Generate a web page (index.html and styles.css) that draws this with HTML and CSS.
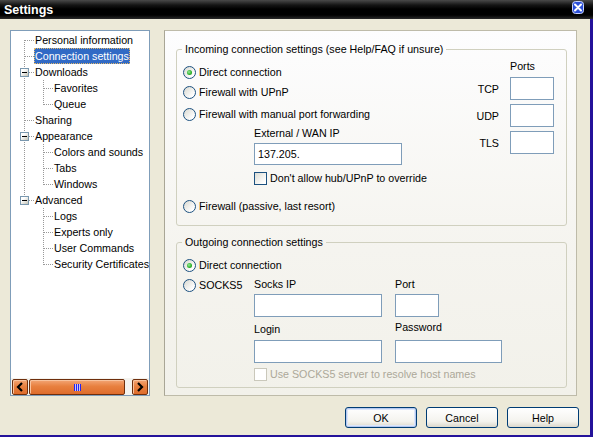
FILE: index.html
```html
<!DOCTYPE html>
<html>
<head>
<meta charset="utf-8">
<title>Settings</title>
<link rel="stylesheet" href="styles.css">
</head>
<body>
<div class="title">
  <span class="title-text">Settings</span>
  <svg class="close" width="12" height="13" viewBox="0 0 12 13">
    <rect x="0.5" y="0.5" width="11" height="12" rx="3" fill="#2C4FD8" stroke="#C8D4FF"/>
    <path d="M3 3.5 L9 9.5 M9 3.5 L3 9.5" stroke="#FFFFFF" stroke-width="2" stroke-linecap="round"/>
  </svg>
</div>
<div class="frame">
  <div class="main">
    <div class="tree">
      <div class="tree-list">
        <div class="node n-first"><span class="g0"></span><span class="lbl">Personal information</span></div>
        <div class="node n-mid"><span class="g0"></span><span class="lbl sel">Connection settings</span></div>
        <div class="node n-mid"><span class="g0"><span class="box"></span></span><span class="lbl">Downloads</span></div>
        <div class="node c-mid"><span class="g1"></span><span class="lbl">Favorites</span></div>
        <div class="node c-last"><span class="g1"></span><span class="lbl">Queue</span></div>
        <div class="node n-mid"><span class="g0"></span><span class="lbl">Sharing</span></div>
        <div class="node n-mid"><span class="g0"><span class="box"></span></span><span class="lbl">Appearance</span></div>
        <div class="node c-mid"><span class="g1"></span><span class="lbl">Colors and sounds</span></div>
        <div class="node c-mid"><span class="g1"></span><span class="lbl">Tabs</span></div>
        <div class="node c-last"><span class="g1"></span><span class="lbl">Windows</span></div>
        <div class="node n-last"><span class="g0"><span class="box"></span></span><span class="lbl">Advanced</span></div>
        <div class="node c-mid-x"><span class="g1"></span><span class="lbl">Logs</span></div>
        <div class="node c-mid-x"><span class="g1"></span><span class="lbl">Experts only</span></div>
        <div class="node c-mid-x"><span class="g1"></span><span class="lbl">User Commands</span></div>
        <div class="node c-last-x"><span class="g1"></span><span class="lbl">Security Certificates</span></div>
      </div>
      <div class="hscroll">
        <span class="sb-btn">
          <svg width="8" height="10" viewBox="0 0 8 10"><polyline points="6,1 2,5 6,9" fill="none" stroke="#000" stroke-width="2.2"/></svg>
        </span>
        <span class="sb-thumb"><span class="grip"></span></span>
        <span class="sb-track"></span>
        <span class="sb-btn">
          <svg width="8" height="10" viewBox="0 0 8 10"><polyline points="2,1 6,5 2,9" fill="none" stroke="#000" stroke-width="2.2"/></svg>
        </span>
      </div>
    </div>
    <div class="page">
      <fieldset class="group g-in">
        <legend>Incoming connection settings (see Help/FAQ if unsure)</legend>
        <div class="in-body">
          <div class="in-left">
            <div class="opt mt8"><span class="radio on"></span><span>Direct connection</span></div>
            <div class="opt mt4"><span class="radio"></span><span>Firewall with UPnP</span></div>
            <div class="opt mt6"><span class="radio"></span><span>Firewall with manual port forwarding</span></div>
            <div class="sub lbl14 mt4">External / WAN IP</div>
            <input class="field f-wan sub mt3" type="text" value="137.205.">
            <div class="opt sub mt5"><span class="check"></span><span>Don't allow hub/UPnP to override</span></div>
            <div class="opt mt12"><span class="radio"></span><span>Firewall (passive, last resort)</span></div>
          </div>
          <div class="ports">
            <span></span><span class="lbl14">Ports</span>
            <span class="plabel">TCP</span><input class="field f-port" type="text">
            <span class="plabel">UDP</span><input class="field f-port" type="text">
            <span class="plabel">TLS</span><input class="field f-port" type="text">
          </div>
        </div>
      </fieldset>
      <fieldset class="group g-out">
        <legend>Outgoing connection settings</legend>
        <div class="out-body">
          <div class="opt mt8"><span class="radio on"></span><span>Direct connection</span></div>
          <div class="socks mt4">
            <div class="opt socks-opt"><span class="radio"></span><span>SOCKS5</span></div>
            <div class="socks-fields">
              <div class="col">
                <div class="lbl14">Socks IP</div>
                <input class="field f-ip mt3" type="text">
                <div class="lbl14 mt5">Login</div>
                <input class="field f-ip mt4" type="text">
              </div>
              <div class="col">
                <div class="lbl14">Port</div>
                <input class="field f-port mt3" type="text">
                <div class="lbl14 mt3">Password</div>
                <input class="field f-pass mt6" type="text">
              </div>
            </div>
          </div>
          <div class="opt sub mt3 disabled"><span class="check dis"></span><span>Use SOCKS5 server to resolve host names</span></div>
        </div>
      </fieldset>
    </div>
  </div>
  <div class="buttons">
    <button class="btn default">OK</button>
    <button class="btn">Cancel</button>
    <button class="btn">Help</button>
  </div>
</div>
</body>
</html>
```
FILE: styles.css
```css
* { box-sizing: border-box; }
html, body { margin: 0; padding: 0; }
body {
  width: 593px;
  height: 437px;
  overflow: hidden;
  background: #ECE9D8;
  font-family: "Liberation Sans", Arial, sans-serif;
  font-size: 10.7px;
  color: #000;
}

/* Title bar */
.title {
  height: 19px;
  display: flex;
  align-items: center;
  justify-content: space-between;
  padding: 0 9px 0 4px;
  background: linear-gradient(#4a4a4a 0, #151515 5px, #000 9px, #000 15px, #2a2a2a 19px);
}
.title-text {
  color: #fff;
  font-weight: bold;
  font-size: 12.5px;
}
.close { display: block; margin-top: -5px; }

/* Window frame */
.frame {
  height: 418px;
  border-right: 3px solid #24129A;
  border-bottom: 2px solid #24129A;
  display: flex;
  flex-direction: column;
}
.main {
  display: flex;
  gap: 14px;
  padding: 11px 0 0 10px;
}

/* Tree */
.tree {
  width: 140px;
  height: 366px;
  border: 1px solid #7F9DB9;
  background: #fff;
  display: flex;
  flex-direction: column;
}
.tree-list {
  flex: 1;
  overflow: hidden;
  padding-top: 1px;
  white-space: nowrap;
}
.node {
  height: 16px;
  display: flex;
  align-items: center;
  background-repeat: no-repeat;
}
.g0 { width: 24px; flex: none; display: flex; align-items: center; padding-left: 9px; }
.g1 { width: 43px; flex: none; }
.lbl { line-height: 16px; }
.sel {
  background: #316AC5;
  color: #fff;
  padding: 0 1px;
  margin-left: -1px;
  outline: 1px dotted #E2B86A;
  outline-offset: -1px;
}
.box {
  width: 9px;
  height: 9px;
  border: 1px solid #7A98AF;
  background: linear-gradient(135deg, #ffffff 30%, #C4C2B4);
  display: flex;
  align-items: center;
  justify-content: center;
}
.box::after {
  content: "";
  width: 5px;
  height: 1px;
  background: #000;
}
.n-first {
  background-image: repeating-linear-gradient(to right, #999 0 1px, transparent 1px 2px),
                    repeating-linear-gradient(to bottom, #999 0 1px, transparent 1px 2px);
  background-position: 14px 8px, 13px 8px;
  background-size: 9px 1px, 1px 8px;
}
.n-mid {
  background-image: repeating-linear-gradient(to right, #999 0 1px, transparent 1px 2px),
                    repeating-linear-gradient(to bottom, #999 0 1px, transparent 1px 2px);
  background-position: 14px 8px, 13px 0;
  background-size: 9px 1px, 1px 16px;
}
.n-last {
  background-image: repeating-linear-gradient(to right, #999 0 1px, transparent 1px 2px),
                    repeating-linear-gradient(to bottom, #999 0 1px, transparent 1px 2px);
  background-position: 14px 8px, 13px 0;
  background-size: 9px 1px, 1px 9px;
}
.c-mid {
  background-image: repeating-linear-gradient(to bottom, #999 0 1px, transparent 1px 2px),
                    repeating-linear-gradient(to right, #999 0 1px, transparent 1px 2px),
                    repeating-linear-gradient(to bottom, #999 0 1px, transparent 1px 2px);
  background-position: 13px 0, 33px 8px, 32px 0;
  background-size: 1px 16px, 9px 1px, 1px 16px;
}
.c-last {
  background-image: repeating-linear-gradient(to bottom, #999 0 1px, transparent 1px 2px),
                    repeating-linear-gradient(to right, #999 0 1px, transparent 1px 2px),
                    repeating-linear-gradient(to bottom, #999 0 1px, transparent 1px 2px);
  background-position: 13px 0, 33px 8px, 32px 0;
  background-size: 1px 16px, 9px 1px, 1px 9px;
}
.c-mid-x {
  background-image: repeating-linear-gradient(to right, #999 0 1px, transparent 1px 2px),
                    repeating-linear-gradient(to bottom, #999 0 1px, transparent 1px 2px);
  background-position: 33px 8px, 32px 0;
  background-size: 9px 1px, 1px 16px;
}
.c-last-x {
  background-image: repeating-linear-gradient(to right, #999 0 1px, transparent 1px 2px),
                    repeating-linear-gradient(to bottom, #999 0 1px, transparent 1px 2px);
  background-position: 33px 8px, 32px 0;
  background-size: 9px 1px, 1px 9px;
}

/* Horizontal scrollbar */
.hscroll {
  height: 17px;
  flex: none;
  display: flex;
  padding: 1px 1px 0 1px;
  background: #F4F3EF;
}
.sb-btn, .sb-thumb {
  height: 16px;
  border: 1px solid #6E2E0C;
  border-radius: 2px;
  background: linear-gradient(#F3A676, #E8803F 45%, #DE6C2C);
  box-shadow: inset 1px 1px 0 #F8C39E;
  display: flex;
  align-items: center;
  justify-content: center;
}
.sb-btn { width: 16px; flex: none; }
.sb-thumb { width: 96px; margin-left: 1px; flex: none; }
.sb-track { flex: 1; }
.grip {
  width: 7px;
  height: 7px;
  background: repeating-linear-gradient(to right, #2424F0 0 1px, #C9C4F2 1px 2px);
}

/* Right page */
.page {
  width: 413px;
  height: 366px;
  border: 1px solid #BEBBA9;
  border-left-color: #A9A696;
  background: linear-gradient(#FDFDFE, #F5F4EF 60%, #F2F1EA);
  padding: 11px 9px 0 11px;
}
.group {
  margin: 0;
  border: 1px solid #D0D0BF;
  border-radius: 3px;
  min-width: 0;
}
.group legend {
  padding: 0 3px;
  margin-left: -1px;
  line-height: 14px;
}
.g-in { padding: 0 11px 11px 6px; }
.g-out { padding: 0 11px 5px 6px; margin-top: 9px; }

.in-body { display: flex; justify-content: space-between; align-items: flex-start; }
.in-left { display: flex; flex-direction: column; align-items: flex-start; }

.opt {
  height: 16px;
  display: flex;
  align-items: center;
  gap: 3px;
  white-space: nowrap;
}
.lbl14 { line-height: 14px; height: 14px; white-space: nowrap; }
.sub { margin-left: 71px; }
.mt3 { margin-top: 3px; }
.mt4 { margin-top: 4px; }
.mt5 { margin-top: 5px; }
.mt6 { margin-top: 6px; }
.mt8 { margin-top: 8px; }
.mt12 { margin-top: 12px; }

.radio {
  width: 13px;
  height: 13px;
  flex: none;
  border: 1px solid #1C5180;
  border-radius: 50%;
  background: linear-gradient(135deg, #D8D8D0, #FFFFFF 80%);
  display: flex;
  align-items: center;
  justify-content: center;
}
.radio.on::after {
  content: "";
  width: 5px;
  height: 5px;
  border-radius: 50%;
  background: radial-gradient(circle at 40% 40%, #9BEA9B, #2EB52E 55%, #1B861B);
}
.check {
  width: 13px;
  height: 13px;
  flex: none;
  border: 1px solid #1C5180;
  background: linear-gradient(135deg, #DCDCD4, #FFFFFF 85%);
}
.check.dis {
  border-color: #CAC8BB;
  background: #fff;
}
.disabled { color: #ACA899; }

.field {
  display: block;
  height: 23px;
  border: 1px solid #7F9DB9;
  background: #fff;
  padding: 0 3px;
  margin-left: 0;
  font-family: "Liberation Sans", Arial, sans-serif;
  font-size: 10.7px;
  color: #000;
  outline: none;
}
.f-wan { width: 148px; height: 22px; margin-left: 71px; }
.f-port { width: 44px; }
.f-ip { width: 128px; }
.f-pass { width: 107px; }

.ports {
  display: grid;
  grid-template-columns: auto 44px;
  column-gap: 11px;
  row-gap: 4px;
  align-items: center;
  margin-top: 3px;
  margin-right: 1px;
}
.plabel { text-align: right; }

.out-body { display: flex; flex-direction: column; align-items: flex-start; }
.socks { display: flex; align-items: flex-start; }
.socks-opt { width: 71px; }
.socks-fields { display: flex; gap: 13px; margin-top: 0; }
.col { display: flex; flex-direction: column; align-items: flex-start; }

/* Buttons */
.buttons {
  display: flex;
  justify-content: flex-end;
  gap: 9px;
  padding-right: 11px;
  margin-top: 11px;
}
.btn {
  width: 72px;
  height: 21px;
  border: 1px solid #003C74;
  border-radius: 3px;
  background: linear-gradient(#FFFFFF, #F4F3EE 70%, #DCD8CC);
  font-family: "Liberation Sans", Arial, sans-serif;
  font-size: 10.7px;
  color: #000;
  padding: 0;
}
.btn.default {
  box-shadow: inset 0 0 0 1px #B4C8F0, inset 0 0 0 2px #DCE6FA;
}
```
